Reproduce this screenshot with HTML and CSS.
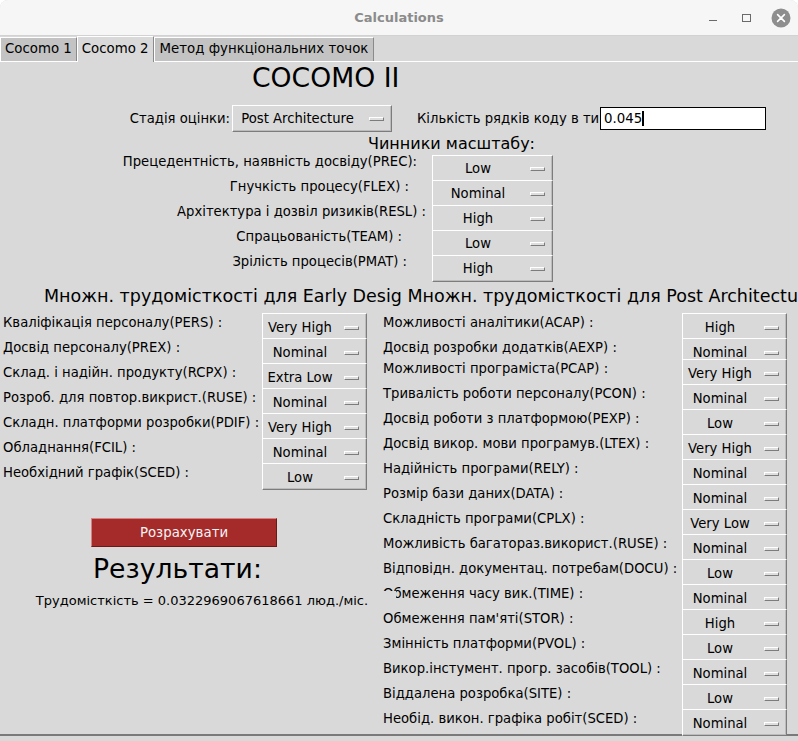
FILE: index.html
```html
<!DOCTYPE html>
<html lang="uk">
<head>
<meta charset="utf-8">
<title>Calculations</title>
<link rel="stylesheet" href="styles.css">
</head>
<body>
<div class="window">
  <header class="titlebar">
    <div></div>
    <div class="title">Calculations</div>
    <div class="controls">
      <svg width="90" height="35" viewBox="0 0 90 35">
        <line x1="5" y1="20.5" x2="13" y2="20.5" stroke="#6a6a6a" stroke-width="1"/>
        <rect x="38.5" y="14.5" width="8" height="7" fill="none" stroke="#6a6a6a" stroke-width="1"/>
        <circle cx="77" cy="18" r="9.5" fill="#8e8e8e"/>
        <path d="M73.6 14.6 L80.4 21.4 M80.4 14.6 L73.6 21.4" stroke="#ffffff" stroke-width="1.6" stroke-linecap="round"/>
      </svg>
    </div>
  </header>
  <nav class="tabs">
    <div class="tab">Cocomo 1</div>
    <div class="tab tab--active">Cocomo 2</div>
    <div class="tab tab--wide">Метод функціональних точок</div>
  </nav>
  <main class="content">
    <h1 class="big">COCOMO II</h1>
    <div class="stage-row">
      <span class="stage-label">Стадія оцінки:</span>
      <div class="box box--wide"><span class="box-text">Post Architecture</span><span class="ind"></span></div>
      <span class="kloc-label">Кількість рядків коду в ти</span>
      <div class="entry">0.045<span class="caret"></span></div>
    </div>
    <h3 class="scale-head">Чинники масштабу:</h3>
    <div class="factors">
      <div class="frow"><span class="flbl pr-prec">Прецедентність, наявність досвіду(PREC):</span><div class="box box--top"><span class="box-text">Low</span><span class="ind"></span></div></div>
      <div class="frow"><span class="flbl pr-flex">Гнучкість процесу(FLEX) :</span><div class="box box--top"><span class="box-text">Nominal</span><span class="ind"></span></div></div>
      <div class="frow"><span class="flbl pr-resl">Архітектура і дозвіл ризиків(RESL) :</span><div class="box box--top"><span class="box-text">High</span><span class="ind"></span></div></div>
      <div class="frow"><span class="flbl pr-team">Спрацьованість(TEAM) :</span><div class="box box--top"><span class="box-text">Low</span><span class="ind"></span></div></div>
      <div class="frow"><span class="flbl pr-pmat">Зрілість процесів(PMAT) :</span><div class="box box--top"><span class="box-text">High</span><span class="ind"></span></div></div>
    </div>
    <div class="heads">
      <h2 class="head head--left">Множн. трудомісткості для Early Desig</h2>
      <h2 class="head">Множн. трудомісткості для Post Architectu</h2>
    </div>
    <div class="cols">
      <section class="col col-left">
        <div class="row"><span class="lbl">Кваліфікація персоналу(PERS) :</span><div class="box"><span class="box-text">Very High</span><span class="ind"></span></div></div>
        <div class="row"><span class="lbl">Досвід персоналу(PREX) :</span><div class="box"><span class="box-text">Nominal</span><span class="ind"></span></div></div>
        <div class="row"><span class="lbl">Склад. і надійн. продукту(RCPX) :</span><div class="box"><span class="box-text">Extra Low</span><span class="ind"></span></div></div>
        <div class="row"><span class="lbl">Розроб. для повтор.викрист.(RUSE) :</span><div class="box"><span class="box-text">Nominal</span><span class="ind"></span></div></div>
        <div class="row"><span class="lbl">Складн. платформи розробки(PDIF) :</span><div class="box"><span class="box-text">Very High</span><span class="ind"></span></div></div>
        <div class="row"><span class="lbl">Обладнання(FCIL) :</span><div class="box"><span class="box-text">Nominal</span><span class="ind"></span></div></div>
        <div class="row"><span class="lbl">Необхідний графік(SCED) :</span><div class="box"><span class="box-text">Low</span><span class="ind"></span></div></div>
        <button class="calc" type="button">Розрахувати</button>
        <div class="results-title">Результати:</div>
        <div class="result">Трудомісткість = 0.0322969067618661 люд./міс.</div>
      </section>
      <section class="col col-right">
        <div class="row"><span class="lbl">Можливості аналітики(ACAP) :</span><div class="box"><span class="box-text">High</span><span class="ind"></span></div></div>
        <div class="row row--short"><span class="lbl">Досвід розробки додатків(AEXP) :</span><div class="box"><span class="box-text">Nominal</span><span class="ind"></span></div></div>
        <div class="row"><span class="lbl">Можливості програміста(PCAP) :</span><div class="box"><span class="box-text">Very High</span><span class="ind"></span></div></div>
        <div class="row"><span class="lbl">Тривалість роботи персоналу(PCON) :</span><div class="box"><span class="box-text">Nominal</span><span class="ind"></span></div></div>
        <div class="row"><span class="lbl">Досвід роботи з платформою(PEXP) :</span><div class="box"><span class="box-text">Low</span><span class="ind"></span></div></div>
        <div class="row"><span class="lbl">Досвід викор. мови програмув.(LTEX) :</span><div class="box"><span class="box-text">Very High</span><span class="ind"></span></div></div>
        <div class="row"><span class="lbl">Надійність програми(RELY) :</span><div class="box"><span class="box-text">Nominal</span><span class="ind"></span></div></div>
        <div class="row"><span class="lbl">Розмір бази даних(DATA) :</span><div class="box"><span class="box-text">Nominal</span><span class="ind"></span></div></div>
        <div class="row"><span class="lbl">Складність програми(CPLX) :</span><div class="box"><span class="box-text">Very Low</span><span class="ind"></span></div></div>
        <div class="row"><span class="lbl">Можливість багатораз.використ.(RUSE) :</span><div class="box"><span class="box-text">Nominal</span><span class="ind"></span></div></div>
        <div class="row"><span class="lbl">Відповідн. документац. потребам(DOCU) :</span><div class="box"><span class="box-text">Low</span><span class="ind"></span></div></div>
        <div class="row"><span class="lbl">Обмеження часу вик.(TIME) :</span><div class="box"><span class="box-text">Nominal</span><span class="ind"></span></div></div>
        <div class="row"><span class="lbl">Обмеження пам'яті(STOR) :</span><div class="box"><span class="box-text">High</span><span class="ind"></span></div></div>
        <div class="row"><span class="lbl">Змінність платформи(PVOL) :</span><div class="box"><span class="box-text">Low</span><span class="ind"></span></div></div>
        <div class="row"><span class="lbl">Викор.інстумент. прогр. засобів(TOOL) :</span><div class="box"><span class="box-text">Nominal</span><span class="ind"></span></div></div>
        <div class="row"><span class="lbl">Віддалена розробка(SITE) :</span><div class="box"><span class="box-text">Low</span><span class="ind"></span></div></div>
        <div class="row"><span class="lbl">Необід. викон. графіка робіт(SCED) :</span><div class="box"><span class="box-text">Nominal</span><span class="ind"></span></div></div>
      </section>
    </div>
  </main>
</div>
</body>
</html>
```

FILE: styles.css
```css
* { box-sizing: border-box; }

body {
  margin: 0;
  width: 798px;
  height: 741px;
  overflow: hidden;
  background: #ffffff;
  font-family: "DejaVu Sans", sans-serif;
  font-size: 13.2px;
  color: #000;
}

.window {
  height: 741px;
  display: flex;
  flex-direction: column;
  background: #d9d9d9;
  border-radius: 8px 8px 0 0;
  overflow: hidden;
}

/* title bar */
.titlebar {
  flex: none;
  height: 36px;
  display: grid;
  grid-template-columns: 1fr auto 1fr;
  align-items: center;
  background: #f6f6f6;
  border-bottom: 1px solid #d2d2d2;
}
.title {
  font-weight: bold;
  font-size: 13px;
  color: #8b8b8b;
}
.controls {
  justify-self: end;
  display: flex;
  margin-right: 4px;
}
.controls svg { display: block; }

/* tabs */
.tabs {
  flex: none;
  height: 26px;
  display: flex;
  align-items: flex-end;
  border-bottom: 1px solid #ffffff;
}
.tab {
  height: 24px;
  padding: 0 4px;
  font-size: 13.33px;
  line-height: 22px;
  white-space: nowrap;
  background: #c3c3c3;
  border: 1px solid;
  border-color: #ffffff #8a8a8a transparent #ffffff;
  border-bottom: none;
}
.tab--wide { padding: 0 5px; }
.tab--active {
  height: 26px;
  margin-bottom: -1px;
  background: #d9d9d9;
  line-height: 24px;
}

/* content */
.content {
  flex: none;
  height: 674px;
  border-bottom: 2px solid #7a7a7a;
}

.big {
  margin: 0 0 0 252px;
  font-size: 26.67px;
  font-weight: normal;
  line-height: 31px;
}

.stage-row {
  margin-top: 12px;
  height: 27px;
  display: flex;
  align-items: center;
}
.stage-label {
  width: 232px;
  padding-right: 2px;
  text-align: right;
  white-space: nowrap;
}
.kloc-label {
  margin-left: 25px;
  width: 183px;
  overflow: hidden;
  white-space: nowrap;
  line-height: 16px;
}
.entry {
  width: 166px;
  height: 23px;
  background: #ffffff;
  border: 1px solid #000000;
  padding-left: 3px;
  display: flex;
  align-items: center;
  font-size: 13.33px;
}
.caret {
  display: block;
  width: 2px;
  height: 15px;
  background: #000;
}

.scale-head {
  margin: 2px 0 0 368px;
  font-size: 16px;
  font-weight: normal;
  line-height: 20px;
  white-space: nowrap;
}

.factors { margin-top: 1px; }
.frow {
  display: flex;
  height: 25px;
  align-items: flex-start;
}
.flbl {
  width: 432px;
  text-align: right;
  line-height: 14px;
  white-space: nowrap;
}
.pr-prec { padding-right: 15px; }
.pr-flex { padding-right: 23px; }
.pr-resl { padding-right: 6px; }
.pr-team { padding-right: 30px; }
.pr-pmat { padding-right: 25px; }

/* option menus */
.box {
  flex: none;
  width: 105px;
  height: 27px;
  display: flex;
  align-items: center;
  padding-top: 3px;
  background: #d9d9d9;
  border: 1px solid;
  border-color: #ffffff #7c7c7c #7c7c7c #ffffff;
  box-shadow: inset -1px -1px 0 #bcbcbc;
}
.box--top {
  width: 121px;
  padding-top: 1px;
}
.box--wide {
  width: 160px;
  padding-top: 1px;
}
.box-text {
  flex: 1;
  min-width: 0;
  text-align: center;
  line-height: 16px;
  white-space: nowrap;
}
.ind {
  flex: none;
  width: 15px;
  height: 4px;
  margin: 0 7px;
  background: #dedede;
  border: 1px solid;
  border-color: #ffffff #7c7c7c #7c7c7c #ffffff;
}

/* headings */
.heads {
  margin-top: 5px;
  display: flex;
  height: 22px;
}
.head {
  margin: 0;
  font-size: 17.5px;
  font-weight: normal;
  line-height: 22px;
  white-space: nowrap;
}
.head--left {
  margin-left: 44px;
  width: 371px;
  overflow: hidden;
}

/* columns */
.cols {
  margin-top: 6px;
  display: flex;
}
.col-left { flex: none; width: 383px; }
.col-right { flex: 1; min-width: 0; }

.row {
  display: flex;
  height: 25px;
  align-items: flex-start;
}
.row--short { height: 21px; }
.lbl {
  line-height: 20px;
  white-space: nowrap;
}
.col-left .lbl { width: 262px; padding-left: 3px; }
.col-right .lbl { width: 299px; }

.calc {
  display: block;
  margin: 30px 0 0 91px;
  width: 186px;
  height: 29px;
  padding: 0;
  background: #a52a2a;
  color: #f4f4f4;
  font-family: "DejaVu Sans", sans-serif;
  font-size: 13.33px;
  border: 1px solid;
  border-color: #d98080 #6d1717 #6d1717 #d98080;
}

.results-title {
  margin: 6px 0 0 93px;
  font-size: 26.67px;
  line-height: 31px;
  white-space: nowrap;
}

.result {
  position: relative;
  z-index: 1;
  margin: 7px 0 0 8px;
  width: 388px;
  height: 20px;
  line-height: 20px;
  text-align: center;
  background: #d9d9d9;
  white-space: nowrap;
  font-size: 13px;
}
```
